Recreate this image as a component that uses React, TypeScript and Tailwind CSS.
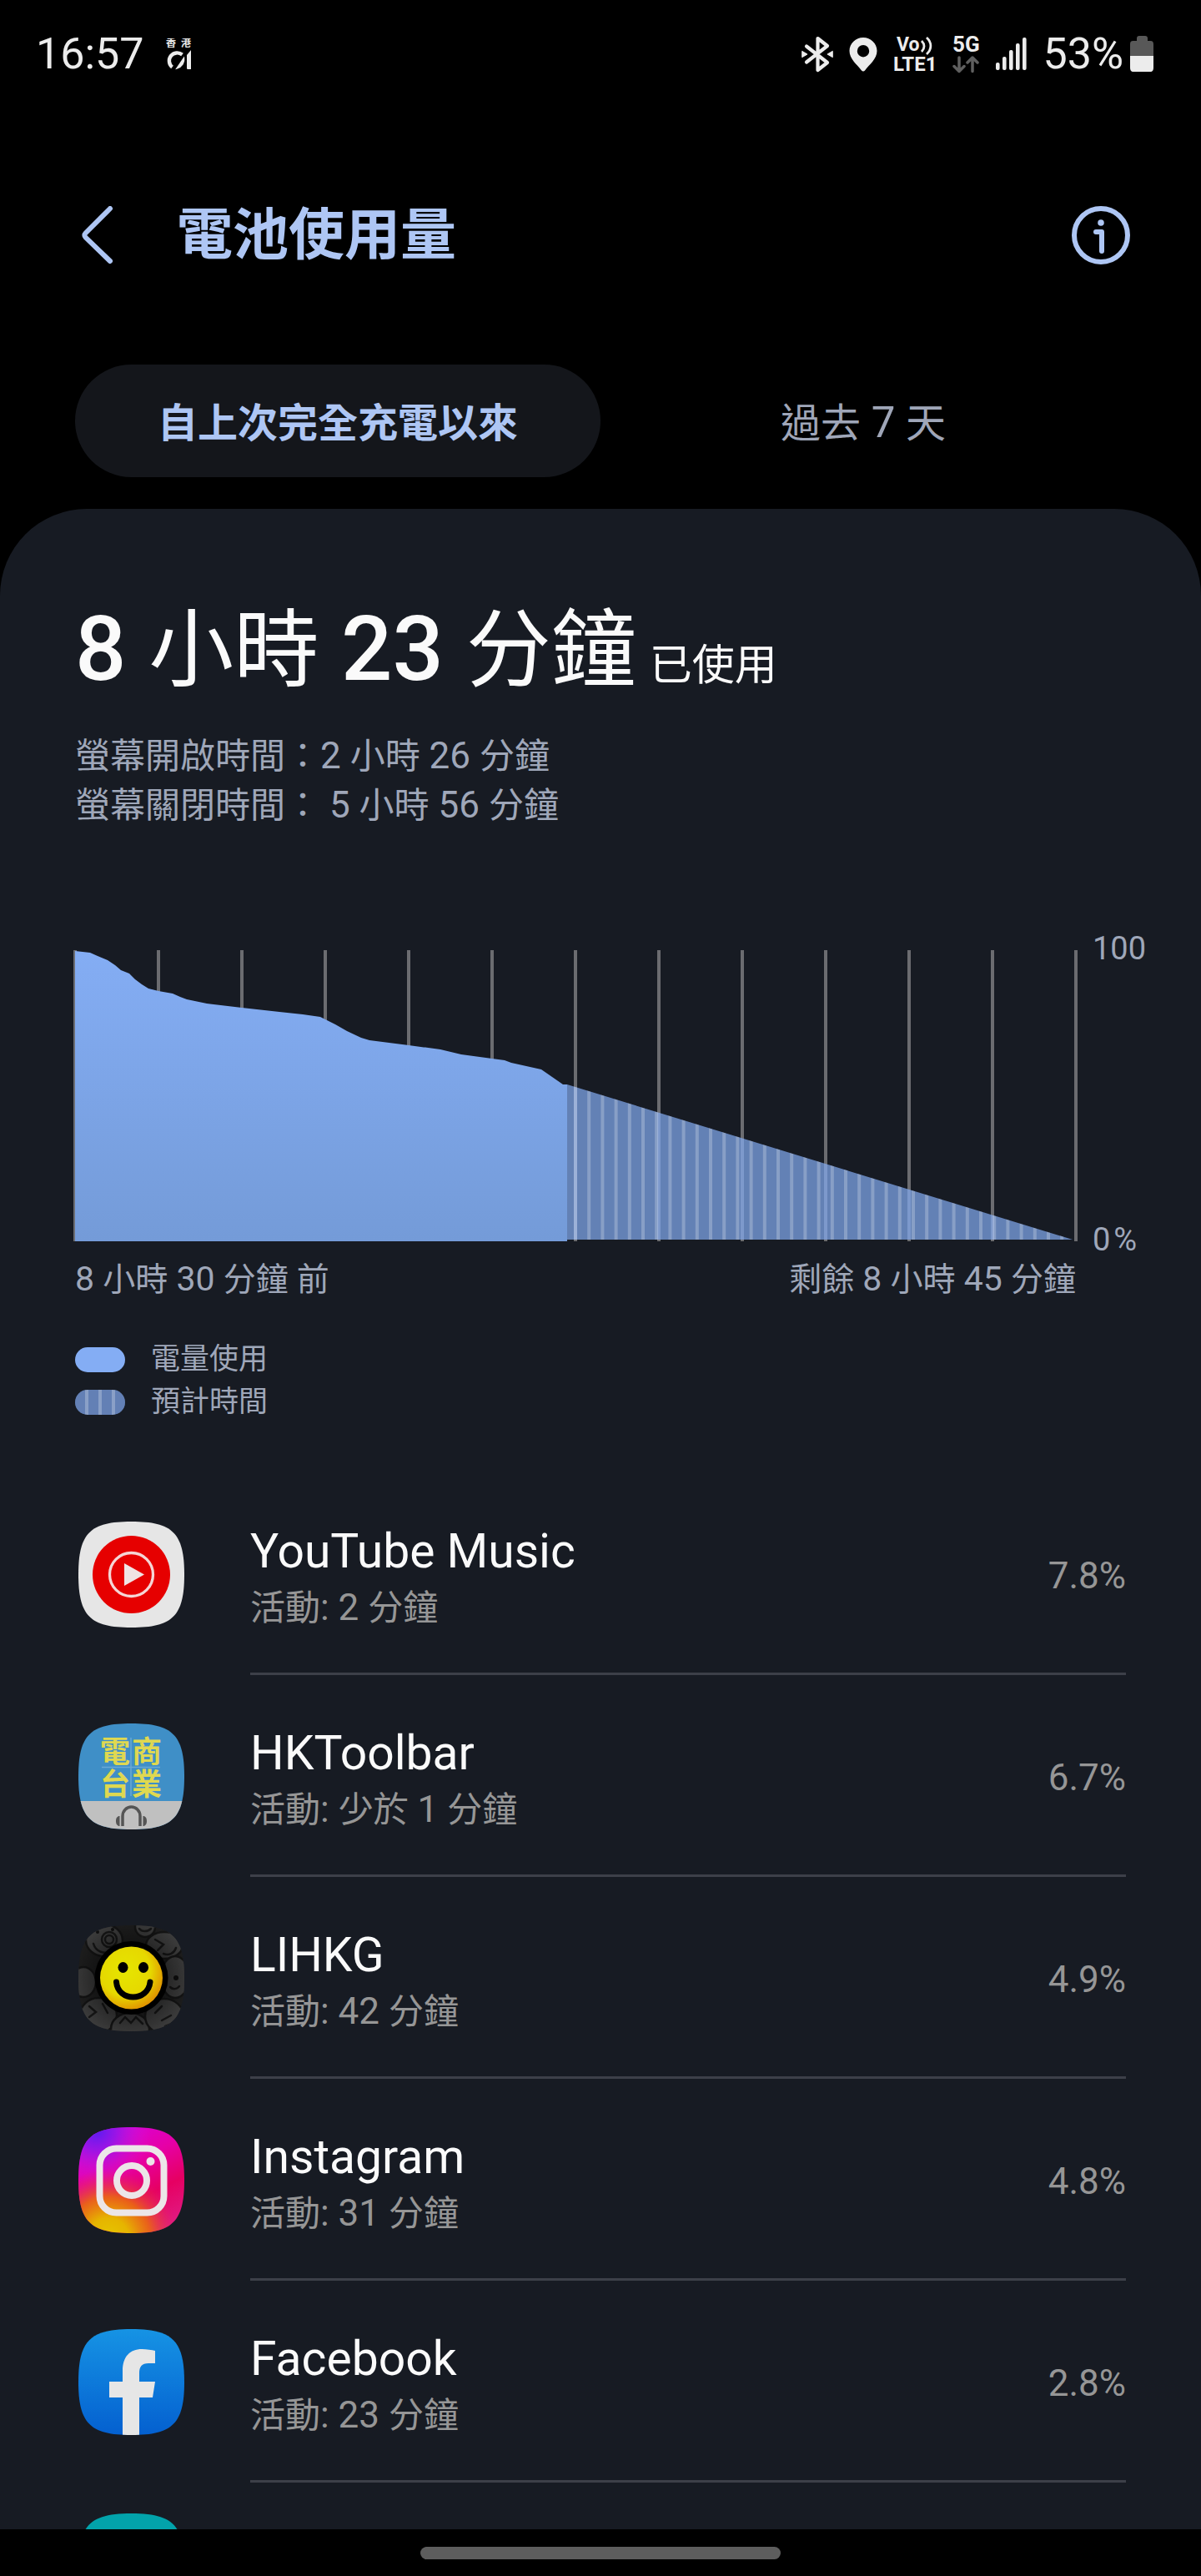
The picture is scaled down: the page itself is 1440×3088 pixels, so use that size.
import { useState } from "react";
import type { ReactNode } from "react";
import clsx from "clsx";

// --- Types ---
interface AppUsage {
  name: string;
  activity: string;
  percent: string;
  icon: ReactNode;
}

// --- Text helpers ---
// Han runs are set slightly smaller than the Latin digits beside them
function MixedText({ text, cjkClass }: { text: string; cjkClass: string }) {
  const runs = text.split(/([\u3000-\u9fff\uff00-\uffef]+)/).filter(Boolean);
  return (
    <>
      {runs.map((run, i) =>
        /[\u3000-\u9fff\uff00-\uffef]/.test(run)
          ? <span key={i} className={clsx("leading-none", cjkClass)}>{run}</span>
          : run
      )}
    </>
  );
}

// --- Status bar icons ---
function Hk01Logo() {
  return (
    <svg width="32" height="38" viewBox="0 0 32 38" fill="none" aria-label="香港01">
      <text x="1" y="10" fontSize="12" fontWeight="700" fill="#ececec">香</text>
      <text x="19" y="10" fontSize="12" fontWeight="700" fill="#ececec">港</text>
      <path d="M20.500 19.500A9.600 9.600 0 1 0 8.500 34.500" stroke="#ececec" strokeWidth="4.400" />
      <path d="M22.500 23.500c1 5-2 10.500-8.500 12.500Z" fill="#ececec" stroke="#ececec" strokeWidth="1.500" />
      <path d="M31 14v23h-3.500c-1 0-1.500-.5-1.500-1.500V20Z" fill="#ececec" />
    </svg>
  );
}

function BluetoothIcon() {
  return (
    <svg width="38" height="44" viewBox="0 0 38 44" fill="none" stroke="#ececec" strokeWidth="4.200" strokeLinecap="round" strokeLinejoin="round">
      <path d="M6 12.500 31 32 19.500 41V3L31 12 6 31.500" />
      <path d="M1 18.500 7 22 1 25.500ZM37 18.500 31 22 37 25.500Z" fill="#ececec" strokeWidth="1" />
    </svg>
  );
}

function PinIcon() {
  return (
    <svg width="34" height="42" viewBox="0 0 34 42">
      <path
        d="M17 1C8 1 .500 8 .500 17c0 10 9 16 14.500 23.500 1 1.200 3 1.200 4 0C24.500 33 33.500 27 33.500 17 33.500 8 26 1 17 1Zm0 9a7.200 7.200 0 1 1 0 14.400A7.200 7.200 0 0 1 17 10Z"
        fill="#ececec"
        fillRule="evenodd"
      />
    </svg>
  );
}

function VolteIcon() {
  return (
    <svg width="52" height="60" viewBox="0 -8 52 60" fill="none">
      <text x="4" y="18" fontSize="23" fontWeight="700" fill="#ececec">Vo</text>
      <path d="M34 6c4 4 4 9 0 13M40 2c6.500 6 6.500 14 0 20" stroke="#ececec" strokeWidth="2.800" />
      <text x="0" y="42" fontSize="24" fontWeight="700" fill="#ececec">LTE1</text>
    </svg>
  );
}

function FiveGIcon() {
  return (
    <svg width="33" height="62" viewBox="0 -8 33 62" fill="none">
      <text x="0" y="20" fontSize="26" fontWeight="700" fill="#ececec">5G</text>
      <path
        d="M8 27v16M2 37.500 8 43.500l6-6M24 43.500v-16M18 33l6-6 6 6"
        stroke="#5f5f5f"
        strokeWidth="3.500"
        strokeLinecap="round"
        strokeLinejoin="round"
      />
    </svg>
  );
}

function SignalIcon() {
  return (
    <svg width="37" height="40" viewBox="0 0 37 40" fill="#ececec">
      <rect x="0" y="30" width="4.600" height="9" rx="2" />
      <rect x="8" y="23" width="4.600" height="16" rx="2" />
      <rect x="16" y="15" width="4.600" height="24" rx="2" />
      <rect x="24" y="7" width="4.600" height="32" rx="2" />
      <rect x="32" y="0" width="4.600" height="39" rx="2" />
    </svg>
  );
}

function BatteryIcon() {
  return (
    <svg width="28" height="44" viewBox="0 0 28 44">
      <path d="M8 3c0-2 1-3 3-3h7c2 0 3 1 3 3v3h3.500C27 6 28 7.500 28 10v14H0V10C0 7.500 1 6 3.500 6H8Z" fill="#585858" />
      <path d="M0 24h28v14c0 3-1 5-4 5H4c-3 0-4-2-4-5Z" fill="#ececec" />
    </svg>
  );
}

// --- App icons ---
const SQUIRCLE =
  "M63.500 0C113 0 127 14 127 63.500S113 127 63.500 127 0 113 0 63.500 14 0 63.500 0Z";

function AppIcon({ id, children }: { id: string; children: ReactNode }) {
  return (
    <svg width="127" height="127" viewBox="0 0 127 127" fill="none" className="shrink-0" aria-hidden="true">
      <clipPath id={`clip-${id}`}><path d={SQUIRCLE} /></clipPath>
      <g clipPath={`url(#clip-${id})`}>{children}</g>
    </svg>
  );
}

const youtubeMusicIcon = (
  <AppIcon id="ytm">
    <rect width="127" height="127" fill="#e6e6e6" />
    <circle cx="63.500" cy="63.500" r="46.500" fill="#e60000" />
    <circle cx="63.500" cy="63.500" r="26" stroke="#f5d5d5" strokeWidth="3.300" />
    <path d="M55 50v27l24-13.500Z" fill="#f0e4e4" />
  </AppIcon>
);

const hkToolbarIcon = (
  <AppIcon id="hkt">
    <rect width="127" height="127" fill="#3f8fc7" />
    <rect y="93" width="127" height="34" fill="#c0c0c0" />
    <path d="M63 17v70M28 52.500h70" stroke="#6aa9d5" strokeWidth="1.500" />
    <g fontSize="36" fontWeight="700" fill="#dfd850">
      <text x="26" y="47">電</text>
      <text x="64" y="47">商</text>
      <text x="26" y="86">台</text>
      <text x="64" y="86">業</text>
    </g>
    <path d="M53 123v-12a10.500 11 0 0 1 21 0v12" stroke="#555" strokeWidth="3.500" />
    <path d="M49.500 111v12c-3 0-4.500-2.500-4.500-6s1.500-6 4.500-6ZM77.500 111v12c3 0 4.500-2.500 4.500-6s-1.500-6-4.500-6Z" fill="#555" />
  </AppIcon>
);

const lihkgIcon = (
  <AppIcon id="lihkg">
    <radialGradient id="lihkg-face" cx="0.4" cy="0.38" r="0.68">
      <stop offset="0" stopColor="#e6e600" />
      <stop offset="0.6" stopColor="#e6d800" />
      <stop offset="1" stopColor="#e08a00" />
    </radialGradient>
    <radialGradient id="lihkg-shade" cx="0.5" cy="0.5" r="0.62">
      <stop offset="0.5" stopColor="#000" stopOpacity="0.5" />
      <stop offset="1" stopColor="#000" stopOpacity="0.1" />
    </radialGradient>
    <rect width="127" height="127" fill="#242424" />
    <g fill="#484848" stroke="#181818" strokeWidth="2.500">
      <ellipse cx="31" cy="18" rx="22" ry="19" />
      <circle cx="80" cy="2" r="12" />
      <ellipse cx="103" cy="24" rx="22" ry="16" />
      <ellipse cx="6" cy="68" rx="15" ry="18" />
      <ellipse cx="116" cy="62" rx="17" ry="25" />
      <ellipse cx="24" cy="108" rx="22" ry="21" />
      <ellipse cx="62" cy="124" rx="23" ry="19" />
      <ellipse cx="103" cy="109" rx="23" ry="21" />
    </g>
    <g stroke="#1a1a1a" strokeWidth="2.500" strokeLinecap="round">
      <circle cx="37" cy="17" r="9" />
      <circle cx="37" cy="17" r="5" />
      <path d="M18 22c3 10 13 13 22 9M92 17l10 6-7 7M102 34c7 3 13-1 15-7M73 4c3 4 10 4 14 0M110 74c3 3 8 3 11-1M13 97l8 7-8 6M29 94l6 11M50 117l6-7 7 7 6-7 8 8M92 105l8-8M100 114l11-6M104 121l10-4" />
    </g>
    <circle cx="117" cy="63" r="3" fill="#111" />
    <circle cx="23" cy="8" r="2" fill="#111" />
    <circle cx="41" cy="5" r="2" fill="#111" />
    <rect width="127" height="127" fill="url(#lihkg-shade)" />
    <circle cx="63.500" cy="63" r="44" fill="#000" />
    <circle cx="63.500" cy="63" r="37.500" fill="url(#lihkg-face)" />
    <ellipse cx="53.500" cy="50.500" rx="6" ry="6.500" fill="#000" />
    <ellipse cx="78" cy="50.500" rx="6" ry="6.500" fill="#000" />
    <path d="M45.500 68c2 24 38 24 40.500 0" stroke="#000" strokeWidth="7" strokeLinecap="round" />
  </AppIcon>
);

const instagramIcon = (
  <AppIcon id="ig">
    <linearGradient id="ig-base" x1="0.3" y1="0" x2="0.8" y2="1">
      <stop offset="0" stopColor="#d800dc" />
      <stop offset="0.35" stopColor="#e600a6" />
      <stop offset="0.65" stopColor="#e60062" />
      <stop offset="1" stopColor="#e01e86" />
    </linearGradient>
    <radialGradient id="ig-purple" gradientUnits="userSpaceOnUse" cx="22" cy="4" r="66">
      <stop offset="0" stopColor="#5a1cf0" />
      <stop offset="0.35" stopColor="#8e18ea" stopOpacity="0.85" />
      <stop offset="1" stopColor="#e01ad8" stopOpacity="0" />
    </radialGradient>
    <radialGradient id="ig-yellow" gradientUnits="userSpaceOnUse" cx="36" cy="134" r="84">
      <stop offset="0" stopColor="#e6c800" />
      <stop offset="0.3" stopColor="#e6b400" />
      <stop offset="0.6" stopColor="#ea6a10" stopOpacity="0.9" />
      <stop offset="1" stopColor="#e6205a" stopOpacity="0" />
    </radialGradient>
    <rect width="127" height="127" fill="url(#ig-base)" />
    <rect width="127" height="127" fill="url(#ig-purple)" />
    <rect width="127" height="127" fill="url(#ig-yellow)" />
    <rect x="25.500" y="25.500" width="77" height="77" rx="20" stroke="#ece6e8" strokeWidth="8" />
    <circle cx="64" cy="64" r="18" stroke="#ece6e8" strokeWidth="8" />
    <circle cx="86.500" cy="41" r="5" fill="#ece6e8" />
  </AppIcon>
);

const facebookIcon = (
  <AppIcon id="fb">
    <linearGradient id="fb-base" x1="0" y1="0" x2="0" y2="1">
      <stop offset="0" stopColor="#1693e4" />
      <stop offset="1" stopColor="#0460d0" />
    </linearGradient>
    <rect width="127" height="127" fill="url(#fb-base)" />
    <path
      d="M53 127V82H37V63h16V50c0-17 9-26 23-26 6 0 12 1 16 2v15h-8c-8 0-11 4-11 12v10h19l-3 19H73v45Z"
      fill="#e6e6e6"
    />
  </AppIcon>
);

// --- Data ---
const TABS = ["自上次完全充電以來", "過去 7 天"];

const APPS: AppUsage[] = [
  { name: "YouTube Music", activity: "活動: 2 分鐘", percent: "7.8%", icon: youtubeMusicIcon },
  { name: "HKToolbar", activity: "活動: 少於 1 分鐘", percent: "6.7%", icon: hkToolbarIcon },
  { name: "LIHKG", activity: "活動: 42 分鐘", percent: "4.9%", icon: lihkgIcon },
  { name: "Instagram", activity: "活動: 31 分鐘", percent: "4.8%", icon: instagramIcon },
  { name: "Facebook", activity: "活動: 23 分鐘", percent: "2.8%", icon: facebookIcon },
];

const LEVELS: [number, number][] = [
  [2, 1], [20, 3], [29, 7], [41, 12], [50, 18], [57, 24], [67, 28], [74, 35], [82, 41], [90, 46],
  [102, 49], [119, 52], [128, 56], [136, 59], [160, 64], [202, 69], [247, 74], [275, 77], [296, 80],
  [314, 89], [328, 97], [345, 105], [355, 108], [402, 114], [440, 119], [465, 125], [502, 130],
  [517, 132], [525, 135], [561, 143], [587, 161], [592, 161],
];

// --- Chart ---
function BatteryChart() {
  const used = `M2 349L${LEVELS.map((p) => p.join(" ")).join("L")}V349Z`;
  return (
    <svg viewBox="0 0 1204 349" className="mt-[22px] mb-[18px] h-auto min-w-0 flex-1" role="img" aria-label="電量使用">
      <defs>
        <linearGradient id="used-fill" x1="0" y1="0" x2="0" y2="1">
          <stop offset="0" stopColor="#84adf4" />
          <stop offset="1" stopColor="#749bd8" />
        </linearGradient>
        <clipPath id="estimate-clip"><path d="M592 161 1198 347H592Z" /></clipPath>
      </defs>
      {Array.from({ length: 13 }, (_, i) => (
        <rect key={i} x={i * 100} y="0" width="4" height="349" fill="#6b6c70" />
      ))}
      <path d={used} fill="url(#used-fill)" />
      <g clipPath="url(#estimate-clip)">
        <rect x="592" y="100" width="612" height="249" fill="#84adf4" fillOpacity="0.7" />
        {Array.from({ length: 37 }, (_, i) => (
          <rect key={i} x={600 + i * 16.2} y="100" width="4" height="249" fill="#fff" fillOpacity="0.24" />
        ))}
      </g>
    </svg>
  );
}

function LegendItem({ label, children }: { label: string; children?: ReactNode }) {
  return (
    <li className="flex h-[51px] items-center gap-[31px] text-[35px] leading-[51px]">
      <span className="flex h-[30px] w-[60px] justify-evenly overflow-hidden rounded-full bg-[#84adf4]">
        {children}
      </span>
      {label}
    </li>
  );
}

function AppRow({ app }: { app: AppUsage }) {
  return (
    <li className="flex items-center gap-[79px] pl-[94px]">
      {app.icon}
      <div className="mr-[90px] flex min-w-0 flex-1 items-center justify-between border-b-3 border-[#3d4049] pt-[58px] pb-[47px]">
        <div>
          <p className="text-[57px] leading-[72px] text-[#fafafa]">{app.name}</p>
          <p className="text-[44px] leading-[62px] text-[#969696]">
            <MixedText text={app.activity} cjkClass="text-[42px]" />
          </p>
        </div>
        <span className="pb-1 text-[44px] leading-[62px] text-[#969696]">{app.percent}</span>
      </div>
    </li>
  );
}

export default function App() {
  const [activeTab, setActiveTab] = useState(0);

  return (
    <div
      lang="zh-Hant-HK"
      className="flex min-h-screen flex-col bg-black font-['Roboto','Noto_Sans_CJK_TC',sans-serif]"
    >
      {/* Status bar */}
      <div className="flex h-[130px] items-center justify-between pr-[57px] pl-[43px] text-[52px] text-[#ececec]">
        <div className="flex items-center gap-[25px]">
          <span>16:57</span>
          <Hk01Logo />
        </div>
        <div className="flex items-center gap-[19px]">
          <BluetoothIcon />
          <PinIcon />
          <VolteIcon />
          <FiveGIcon />
          <SignalIcon />
          <div className="flex items-center gap-2">
            <span>53%</span>
            <BatteryIcon />
          </div>
        </div>
      </div>

      {/* Header */}
      <header className="flex h-[307px] items-center pr-[85px] pb-1 pl-[98px] text-[#aec6f4]">
        <button type="button" aria-label="返回">
          <svg width="38" height="70" viewBox="0 0 38 70" fill="none" stroke="currentColor" strokeWidth="6" strokeLinecap="round" strokeLinejoin="round">
            <path d="M34 3 4.500 32.500c-1.500 1.500-1.500 3.500 0 5L34 66" />
          </svg>
        </button>
        <h1 className="ml-[76px] flex-1 text-[67px] leading-[80px] font-bold">電池使用量</h1>
        <button type="button" aria-label="資訊">
          <svg width="70" height="70" viewBox="0 0 70 70" fill="none" stroke="currentColor" strokeWidth="6" strokeLinecap="round" strokeLinejoin="round">
            <circle cx="35" cy="35" r="32" />
            <path d="M29 31h7v23" />
            <circle cx="35" cy="20" r="3.800" fill="currentColor" stroke="none" />
          </svg>
        </button>
      </header>

      {/* Tabs */}
      <div role="tablist" className="mx-[90px] flex">
        {TABS.map((tab, i) => (
          <button
            key={tab}
            type="button"
            role="tab"
            aria-selected={activeTab === i}
            onClick={() => setActiveTab(i)}
            className={clsx(
              "h-[135px] flex-1 rounded-full pt-1 text-[51px] leading-[60px]",
              activeTab === i ? "bg-[#14161b] font-bold text-[#aec6f4]" : "text-[#9fa6b8]"
            )}
          >
            <MixedText text={tab} cjkClass="text-[48px]" />
          </button>
        ))}
      </div>

      <main className="mt-[38px] flex-1 rounded-t-[104px] bg-[#171b23] pt-[108px] text-[#9fa7b9]">
        {/* Summary */}
        <section className="px-[90px]">
          <h2 className="text-[108px] leading-[120px] font-medium text-[#fafafa]">
            <MixedText text="8 小時 23 分鐘" cjkClass="text-[102px] font-normal" />
            <span className="ml-4 text-[51px] leading-none font-normal">已使用</span>
          </h2>
          <div className="mt-[39px] text-[44px] leading-[59px]">
            <p><MixedText text="螢幕開啟時間：2 小時 26 分鐘" cjkClass="text-[42px]" /></p>
            <p><MixedText text="螢幕關閉時間： 5 小時 56 分鐘" cjkClass="text-[42px]" /></p>
          </div>
        </section>

        {/* Chart */}
        <section className="mt-[122px]">
          <div className="flex gap-[18px] pl-[88px]">
            <BatteryChart />
            <div className="flex w-[130px] flex-col justify-between text-[38px] leading-[40px]">
              <span>100</span>
              <span className="flex gap-1"><span>0</span><span>%</span></span>
            </div>
          </div>
          <div className="mt-[3px] flex justify-between pr-[150px] pl-[90px] text-[41px] leading-[48px]">
            <span><MixedText text="8 小時 30 分鐘 前" cjkClass="text-[39px]" /></span>
            <span><MixedText text="剩餘 8 小時 45 分鐘" cjkClass="text-[39px]" /></span>
          </div>
          <ul className="mt-[47px] pl-[90px]">
            <LegendItem label="電量使用" />
            <LegendItem label="預計時間">
              <span className="flex flex-1 justify-evenly bg-[#171b23]/30">
                <span className="w-1 bg-white/25" />
                <span className="w-1 bg-white/25" />
                <span className="w-1 bg-white/25" />
              </span>
            </LegendItem>
          </ul>
        </section>

        {/* Apps */}
        <ul className="mt-[60px]">
          {APPS.map((app) => <AppRow key={app.name} app={app} />)}
          {/* Next entry, cut off by the navigation bar */}
          <li className="h-[56px] overflow-hidden pt-[37px] pl-[94px]">
            <AppIcon id="next"><rect width="127" height="127" fill="#02a3ab" /></AppIcon>
          </li>
        </ul>
      </main>

      {/* Navigation bar */}
      <footer className="flex h-[56px] items-center justify-center">
        <span className="h-[15px] w-[30%] rounded-full bg-[#5d5d5d]" />
      </footer>
    </div>
  );
}
